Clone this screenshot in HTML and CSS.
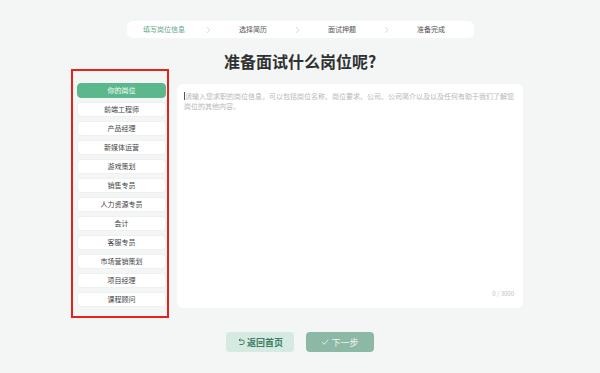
FILE: index.html
```html
<!DOCTYPE html>
<html lang="zh">
<head>
<meta charset="utf-8">
<link rel="stylesheet" href="styles.css">
</head>
<body>
<div class="steps">
  <div class="step active">填写岗位信息</div>
  <div class="chev"><svg width="5" height="8" viewBox="0 0 5 8"><path d="M1 1 L4 4 L1 7" fill="none" stroke="#cfd3d2" stroke-width="0.8"/></svg></div>
  <div class="step">选择简历</div>
  <div class="chev"><svg width="5" height="8" viewBox="0 0 5 8"><path d="M1 1 L4 4 L1 7" fill="none" stroke="#cfd3d2" stroke-width="0.8"/></svg></div>
  <div class="step">面试押题</div>
  <div class="chev"><svg width="5" height="8" viewBox="0 0 5 8"><path d="M1 1 L4 4 L1 7" fill="none" stroke="#cfd3d2" stroke-width="0.8"/></svg></div>
  <div class="step">准备完成</div>
</div>
<h1 class="title">准备面试什么岗位呢?</h1>
<div class="main">
  <div class="list">
    <div class="item active">你的岗位</div>
    <div class="item">前端工程师</div>
    <div class="item">产品经理</div>
    <div class="item">新媒体运营</div>
    <div class="item">游戏策划</div>
    <div class="item">销售专员</div>
    <div class="item">人力资源专员</div>
    <div class="item">会计</div>
    <div class="item">客服专员</div>
    <div class="item">市场营销策划</div>
    <div class="item">项目经理</div>
    <div class="item">课程顾问</div>
  </div>
  <div class="editor">
    <div class="placeholder"><span class="caret"></span>请输入您求职的岗位信息，可以包括岗位名称、岗位要求、公司、公司简介以及以及任何有助于我们了解您<br>岗位的其他内容。</div>
    <div class="counter">0 / 3000</div>
  </div>
</div>
<div class="actions">
  <div class="btn back"><svg width="8" height="8" viewBox="0 0 8 8"><path d="M2 2 H5 A2 2 0 0 1 5 6.5 H2.5" fill="none" stroke="#3f7d63" stroke-width="1"/><path d="M3.4 0.7 L2 2 L3.4 3.3" fill="none" stroke="#3f7d63" stroke-width="1"/></svg>返回首页</div>
  <div class="btn next"><svg width="8" height="8" viewBox="0 0 8 8"><path d="M1 4.2 L3.2 6.3 L7.2 1.8" fill="none" stroke="#eef5f1" stroke-width="0.9"/></svg>下一步</div>
</div>
</body>
</html>
```

FILE: styles.css
```css
html, body {
  margin: 0;
  padding: 0;
}
body {
  background: #f3f6f5;
  font-family: "Noto Sans CJK SC", "Noto Sans", sans-serif;
  color: #333;
}
.steps {
  width: 347px;
  height: 17px;
  margin: 21px auto 0;
  background: #fff;
  border-radius: 6px;
  display: flex;
  align-items: center;
  padding-right: 5px;
  box-sizing: border-box;
  font-size: 7px;
  color: #555;
}
.step {
  width: 75px;
  text-align: center;
  line-height: 17px;
}
.step.active {
  color: #5ea886;
}
.chev {
  width: 14px;
  display: flex;
  justify-content: center;
  align-items: center;
}
.chev svg {
  display: block;
}
.title {
  margin: 12px 0 0;
  font-size: 16px;
  line-height: 22px;
  font-weight: bold;
  text-align: center;
  color: #2e3133;
}
.main {
  width: 446px;
  margin: 11px auto 0;
  display: flex;
  align-items: flex-start;
  gap: 11px;
}
.list {
  width: 89px;
  flex: none;
  display: flex;
  flex-direction: column;
  gap: 4px;
  position: relative;
}
.list::after {
  content: "";
  position: absolute;
  left: -6px;
  top: -14px;
  width: 98px;
  height: 249px;
  border: 2px solid #e8221b;
  box-sizing: border-box;
  pointer-events: none;
}
.item {
  height: 15px;
  line-height: 13px;
  background: #fff;
  border: 1px solid #edf1ef;
  box-sizing: border-box;
  border-radius: 4px;
  font-size: 7px;
  color: #3f4244;
  text-align: center;
}
.item.active {
  background: #5bb88d;
  border-color: #5bb88d;
  color: #fff;
}
.editor {
  flex: 1;
  height: 224px;
  margin-top: 1px;
  background: #fff;
  border-radius: 6px;
  position: relative;
  padding: 7px 7px;
  box-sizing: border-box;
}
.placeholder {
  font-size: 7px;
  line-height: 10px;
  color: #b4b8ba;
  white-space: nowrap;
}
.caret {
  display: inline-block;
  width: 1px;
  height: 8px;
  background: #555;
  vertical-align: -1px;
}
.counter {
  position: absolute;
  right: 9px;
  bottom: 10px;
  font-size: 6px;
  color: #b8bcbe;
}
.actions {
  display: flex;
  justify-content: center;
  gap: 12px;
  margin-top: 24px;
}
.btn {
  width: 68px;
  height: 20px;
  border-radius: 4px;
  display: flex;
  align-items: center;
  justify-content: center;
  gap: 2px;
  font-size: 9px;
}
.btn svg {
  display: block;
}
.back {
  background: #d5ebe1;
  color: #3f7d63;
  font-weight: bold;
}
.next {
  background: #8cb9a6;
  color: #eef5f1;
}
```
